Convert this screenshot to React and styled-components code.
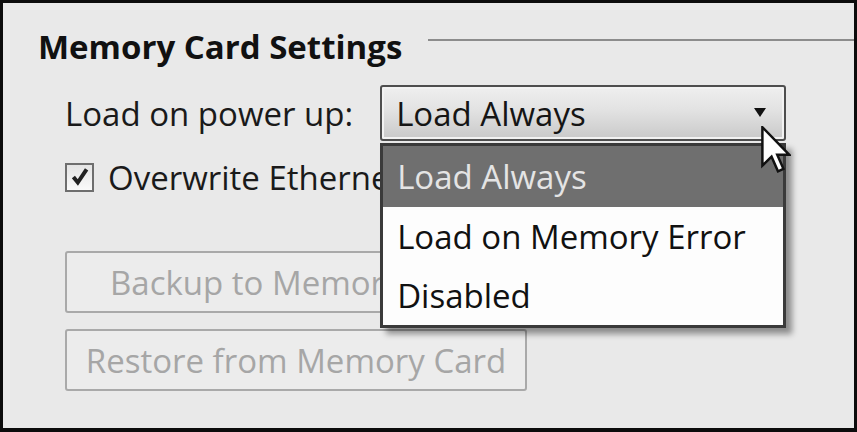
import styled, { createGlobalStyle } from "styled-components";

const GlobalStyle = createGlobalStyle`
  html, body {
    margin: 0;
    padding: 0;
    background: #e9e9e9;
  }
  body {
    font-family: "Open Sans", "Noto Sans", sans-serif;
  }
`;

const options = ["Load Always", "Load on Memory Error", "Disabled"];

function App() {
  return (
    <>
      <GlobalStyle />
      <Frame>
        <Legend>
          <Title>Memory Card Settings</Title>
          <Rule />
        </Legend>

        <Content>
          <Row>
            <Label>Load on power up:</Label>
            <SelectWrap>
              <Select>
                <span>Load Always</span>
                <Arrow />
              </Select>
              <List>
                {options.map((o, i) => (
                  <Item key={o} $active={i === 0} $first={i === 0}>
                    {o}
                  </Item>
                ))}
              </List>
              <Cursor viewBox="0 0 12 19" width="30" height="47">
                <path
                  d="M0.5 0.5 L0.5 16 L4.2 12.4 L6.8 18.3 L9 17.3 L6.5 11.6 L11.3 11.6 Z"
                  fill="#fff"
                  stroke="#111"
                  strokeWidth="1"
                  strokeLinejoin="miter"
                />
              </Cursor>
            </SelectWrap>
          </Row>

          <CheckRow>
            <Box>
              <svg viewBox="0 0 20 20" width="22" height="22">
                <path d="M4 10 L8 15 L16 3" fill="none" stroke="#222" strokeWidth="3.6" />
              </svg>
            </Box>
            <Label>Overwrite Ethernet Settings</Label>
          </CheckRow>

          <Buttons>
            <DisabledButton>Backup to Memory Card</DisabledButton>
            <DisabledButton>Restore from Memory Card</DisabledButton>
          </Buttons>
        </Content>
      </Frame>
    </>
  );
}

export default App;

const Frame = styled.div`
  width: 857px;
  height: 432px;
  box-sizing: border-box;
  border-top: 3px solid #0c0c0c;
  border-left: 3px solid #0c0c0c;
  border-bottom: 4px solid #0c0c0c;
  border-right: 3px solid #0c0c0c;
  background: #e9e9e9;
  display: flex;
  flex-direction: column;
  overflow: hidden;
`;

const Legend = styled.div`
  display: flex;
  align-items: center;
  padding: 24px 0 0 35px;
  height: 40px;
`;

const Title = styled.div`
  font-weight: 700;
  font-size: 33px;
  color: #111;
  line-height: 40px;
`;

const Rule = styled.div`
  flex: 1;
  height: 2px;
  background: #8c8c8c;
  align-self: flex-start;
  margin: 12px 0 0 26px;
`;

const Content = styled.div`
  display: flex;
  flex-direction: column;
  padding: 18px 0 0 62px;
`;

const Row = styled.div`
  display: flex;
  align-items: center;
  height: 56px;
`;

const Label = styled.div`
  font-size: 33px;
  color: #1a1a1a;
  white-space: nowrap;
`;

const SelectWrap = styled.div`
  position: relative;
  margin-left: 27px;
  z-index: 2;
`;

const Select = styled.div`
  width: 406px;
  height: 56px;
  box-sizing: border-box;
  border: 2px solid #4e4e4e;
  border-radius: 3px;
  box-shadow: inset 0 0 0 2px #f2f2f2;
  background: linear-gradient(#efefef, #e2e2e2 45%, #c9c9c9);
  display: flex;
  align-items: center;
  justify-content: space-between;
  padding: 0 18px 0 14px;
  font-size: 33px;
  color: #151515;
`;

const Arrow = styled.div`
  width: 0;
  height: 0;
  border-left: 6px solid transparent;
  border-right: 6px solid transparent;
  border-top: 9px solid #111;
  margin-top: -2px;
`;

const List = styled.div`
  position: absolute;
  top: 58px;
  left: 0;
  width: 406px;
  box-sizing: border-box;
  border: 3px solid #3a3a3a;
  background: #fdfdfd;
  box-shadow: 6px 6px 6px rgba(0, 0, 0, 0.4);
`;

const Item = styled.div`
  height: ${(p) => (p.$first ? "61px" : "59px")};
  display: flex;
  align-items: center;
  padding-left: 14px;
  font-size: 33px;
  color: ${(p) => (p.$active ? "#e4e4e4" : "#111")};
  background: ${(p) => (p.$active ? "#6f6f6f" : "transparent")};
`;

const Cursor = styled.svg`
  position: absolute;
  left: 381px;
  top: 41px;
`;

const CheckRow = styled.div`
  display: flex;
  align-items: center;
  gap: 14px;
  margin-top: 8px;
  height: 56px;
`;

const Box = styled.div`
  width: 29px;
  height: 29px;
  box-sizing: border-box;
  border: 2px solid #6e6e6e;
  background: linear-gradient(#e4e4e4, #fafafa);
  display: flex;
  align-items: center;
  justify-content: center;
`;

const Buttons = styled.div`
  display: flex;
  flex-direction: column;
  gap: 16px;
  margin-top: 46px;
`;

const DisabledButton = styled.div`
  width: 462px;
  height: 62px;
  box-sizing: border-box;
  border: 2px solid #a9a9a9;
  border-radius: 3px;
  background: #ececec;
  display: flex;
  align-items: center;
  justify-content: center;
  font-size: 33px;
  color: #a6a6a6;
`;
